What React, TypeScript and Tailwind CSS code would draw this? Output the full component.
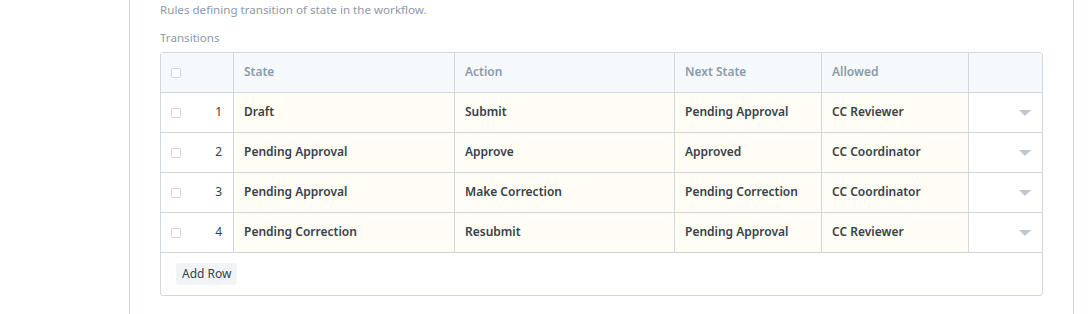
import React from 'react';

interface Transition {
  id: number;
  state: string;
  action: string;
  nextState: string;
  allowed: string;
}

const rows: Transition[] = [
  { id: 1, state: 'Draft', action: 'Submit', nextState: 'Pending Approval', allowed: 'CC Reviewer' },
  { id: 2, state: 'Pending Approval', action: 'Approve', nextState: 'Approved', allowed: 'CC Coordinator' },
  { id: 3, state: 'Pending Approval', action: 'Make Correction', nextState: 'Pending Correction', allowed: 'CC Coordinator' },
  { id: 4, state: 'Pending Correction', action: 'Resubmit', nextState: 'Pending Approval', allowed: 'CC Reviewer' },
];

const Checkbox: React.FC = () => (
  <span className="block w-[10px] h-[10px] rounded-[2px] border border-[#d1d8dd] bg-white" />
);

const App: React.FC = () => {
  const cols = 'grid grid-cols-[73px_221px_220px_147px_147px_73px]';

  return (
    <div className="min-h-[314px] bg-white font-['Noto_Sans',sans-serif] text-[12px]">
      <div className="ml-[129px] w-[945px] min-h-[314px] border-x border-[#d1d8dd] px-[30px]">
        <p className="pt-[2px] text-[11.6px] leading-[16px] text-[#8d99a6]">
          Rules defining transition of state in the workflow.
        </p>
        <p className="mt-[12px] text-[11.6px] leading-[16px] text-[#8d99a6]">Transitions</p>

        <div className="mt-[6px] w-[883px] border border-[#d1d8dd] rounded-[3px]">
          {/* header */}
          <div className={`${cols} h-[40px] bg-[#f5f9fc] border-b border-[#d1d8dd] font-semibold text-[#8d99a6]`}>
            <div className="flex items-center pl-[10px] border-r border-[#d1d8dd]">
              <Checkbox />
            </div>
            <div className="flex items-center px-[10px] pb-[2px] border-r border-[#d1d8dd]">State</div>
            <div className="flex items-center px-[10px] pb-[2px] border-r border-[#d1d8dd]">Action</div>
            <div className="flex items-center px-[10px] pb-[2px] border-r border-[#d1d8dd]">Next State</div>
            <div className="flex items-center px-[10px] pb-[2px] border-r border-[#d1d8dd]">Allowed</div>
            <div />
          </div>

          {rows.map((r) => (
            <div key={r.id} className={`${cols} h-[40px] border-b border-[#d1d8dd] text-[#36414c]`}>
              <div className="flex items-center justify-between pl-[10px] pr-[11px] border-r border-[#d1d8dd] bg-white">
                <Checkbox />
                <span className="-mt-[2px]">{r.id}</span>
              </div>
              <div className="flex items-center px-[10px] pb-[2px] border-r border-[#d1d8dd] bg-[#fffdf4] font-semibold">{r.state}</div>
              <div className="flex items-center px-[10px] pb-[2px] border-r border-[#d1d8dd] bg-[#fffdf4] font-semibold">{r.action}</div>
              <div className="flex items-center px-[10px] pb-[2px] border-r border-[#d1d8dd] bg-[#fffdf4] font-semibold">{r.nextState}</div>
              <div className="flex items-center px-[10px] pb-[2px] border-r border-[#d1d8dd] bg-[#fffdf4] font-semibold">{r.allowed}</div>
              <div className="flex items-center justify-end pr-[11px] bg-white">
                <svg width="12" height="6" viewBox="0 0 12 6">
                  <path d="M0 0 L12 0 L6 6 Z" fill="#c0c6cc" />
                </svg>
              </div>
            </div>
          ))}

          <div className="h-[42px] flex items-center px-[15px]">
            <button className="h-[22px] px-[6px] rounded-[3px] bg-[#f0f4f7] text-[#36414c] text-[12px]">
              Add Row
            </button>
          </div>
        </div>
      </div>
    </div>
  );
};

export default App;
